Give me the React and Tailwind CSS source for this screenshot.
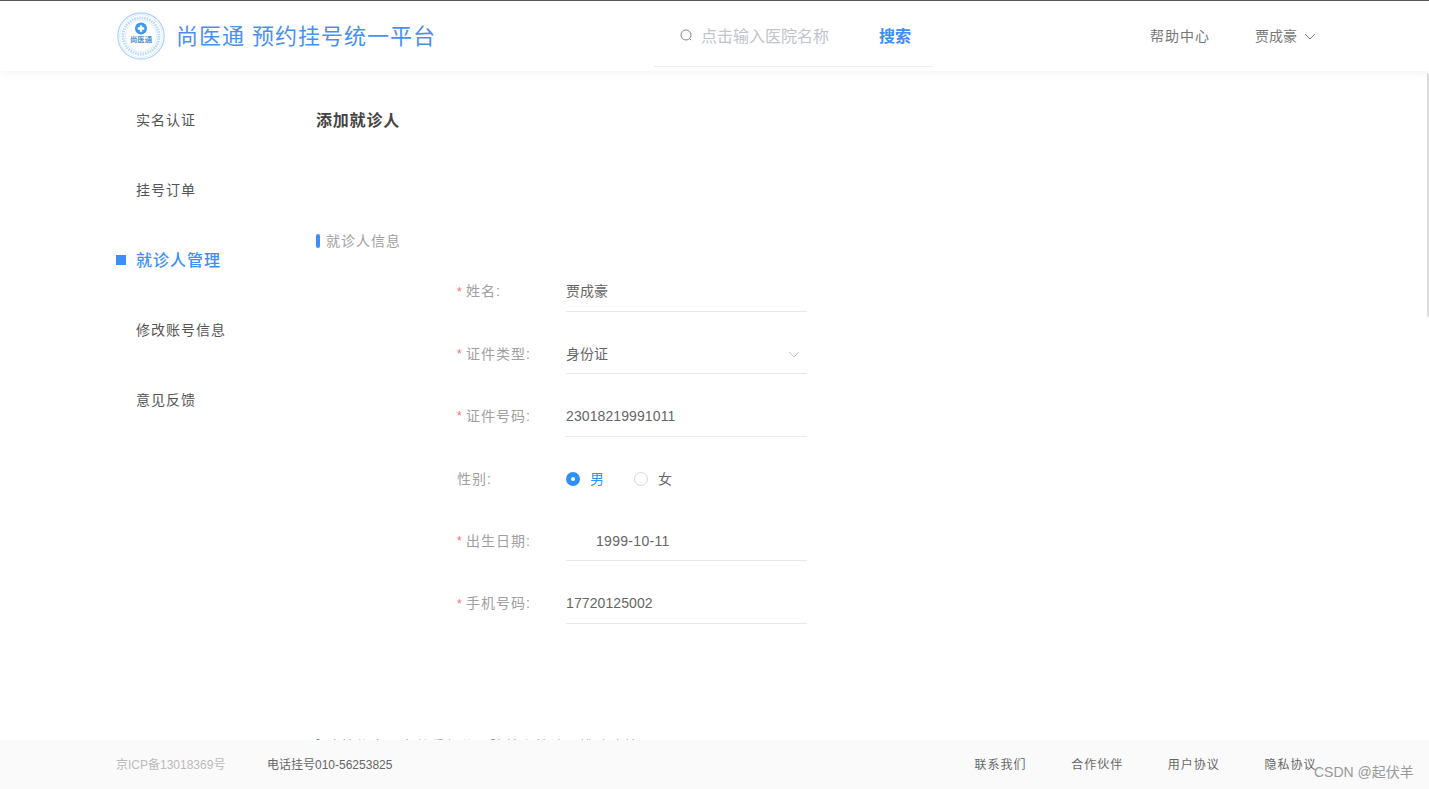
import React from "react";

function Logo() {
  return (
    <svg width="48" height="48" viewBox="0 0 48 48" className="shrink-0">
      <circle cx="24" cy="24" r="23.2" fill="none" stroke="#a9d3fb" strokeWidth="1.2" />
      <circle cx="24" cy="24" r="21.4" fill="none" stroke="#cfe6fd" strokeWidth="0.7" />
      <circle cx="24" cy="24" r="18" fill="none" stroke="#a6d0fa" strokeWidth="3" strokeDasharray="1.6 0.9" opacity="0.75" />
      <circle cx="24" cy="24" r="15.6" fill="none" stroke="#cfe6fd" strokeWidth="0.6" />
      <circle cx="24" cy="16.5" r="6" fill="#3d97f2" />
      <path d="M24 13.2v6.6M20.7 16.5h6.6" stroke="#fff" strokeWidth="2.4" />
      <text x="24" y="29.8" textAnchor="middle" fontSize="7.4" fontWeight="700" fill="#4d8fd6" fontFamily="'Noto Sans CJK SC', sans-serif">尚医通</text>
    </svg>
  );
}

function Field({ required, label, children, plain, short }) {
  return (
    <div className="flex h-[40px] mb-[22.4px] items-center">
      <div className={plain ? "w-[109px] pt-[1px] shrink-0 flex items-center text-[14px] tracking-[1px] text-[#a0a0a0]" : "w-[109px] shrink-0 flex items-center text-[14px] tracking-[1px] text-[#a0a0a0]"}>
        {required && <span className="w-[9px] text-[#f56c6c] text-[12px] leading-none">*</span>}
        <span>{label}:</span>
      </div>
      {plain ? (
        <div className="w-[241px] h-full pt-[1px] flex items-center">{children}</div>
      ) : (
        <div className={short ? "w-[241px] h-[40px] self-start pt-[1px] flex items-center border-b border-[#e8e8e8] text-[14px] text-[#666] relative" : "w-[241px] h-[41px] pt-[1px] flex items-center border-b border-[#e8e8e8] text-[14px] text-[#666] relative"}>
          {children}
        </div>
      )}
    </div>
  );
}

function SideItem({ children, active }) {
  return (
    <div className="h-[70px] flex items-center">
      <span className={active ? "w-[10px] h-[10px] bg-[#3d8ef8] mr-[10px]" : "w-[10px] h-[10px] mr-[10px]"} />
      <span className={active ? "pt-[2px] text-[16px] font-medium tracking-[1px] text-[#3d8ef8]" : "text-[14px] tracking-[1px] text-[#555]"}>{children}</span>
    </div>
  );
}

export default function App() {
  return (
    <div
      className="h-[789px] w-[1429px] flex flex-col overflow-hidden bg-white relative"
      style={{ fontFamily: "'Liberation Sans', 'Noto Sans CJK SC', sans-serif" }}
    >
      <header className="h-[71px] shrink-0 border-t border-[#555] bg-white shadow-[0_2px_8px_rgba(0,0,0,0.05)] relative z-10 flex items-center pl-[117px]">
        <Logo />
        <div className="ml-[12px] w-[477px] -translate-x-[1px] text-[22px] tracking-[1px] text-[#4a90f2]">尚医通 预约挂号统一平台</div>
        <div className="w-[279px] h-[66px] self-start border-b border-[#ececec] flex items-center pl-[26px] pt-[6px]">
          <svg width="13" height="13" viewBox="0 0 13 13" fill="none" stroke="#888" strokeWidth="1" className="shrink-0 -translate-y-[1px]">
            <circle cx="6" cy="6" r="5" />
            <path d="M9.6 9.6l1.6 1.6" />
          </svg>
          <span className="ml-[8px] w-[178px] text-[16px] text-[#c0c4cc]">点击输入医院名称</span>
          <span className="text-[16px] font-bold text-[#3d8ef8]">搜索</span>
        </div>
        <div className="ml-[217px] text-[14px] tracking-[1px] text-[#777]">帮助中心</div>
        <div className="ml-[45px] flex items-center text-[14px] text-[#777]">
          贾成豪
          <svg width="12" height="7" viewBox="0 0 12 7" fill="none" stroke="#777" strokeWidth="1" className="ml-[7px]">
            <path d="M1 1l5 5 5-5" />
          </svg>
        </div>
      </header>

      <main className="flex-1 min-h-0 overflow-hidden flex pl-[116px]">
        <nav className="w-[200px] shrink-0 pt-[14px]">
          <SideItem>实名认证</SideItem>
          <SideItem>挂号订单</SideItem>
          <SideItem active>就诊人管理</SideItem>
          <SideItem>修改账号信息</SideItem>
          <SideItem>意见反馈</SideItem>
        </nav>
        <section className="flex-1">
          <h1 className="h-[24px] mt-[38px] flex items-center text-[16px] font-semibold tracking-[0.8px] text-[#444]">添加就诊人</h1>
          <div className="mt-[96px] h-[24px] flex items-center text-[14px] tracking-[1px] text-[#a0a0a0]">
            <span className="w-[4px] h-[14px] rounded-[2px] bg-[#3d8ef8] mr-[6px]" />
            就诊人信息
          </div>
          <div className="ml-[141px] mt-[18.7px]">
            <Field required label="姓名">贾成豪</Field>
            <Field required short label="证件类型">
              身份证
              <svg width="12" height="7" viewBox="0 0 12 7" fill="none" stroke="#c0c4cc" strokeWidth="1" className="absolute right-[7px] top-[17px]">
                <path d="M1 1l5 5 5-5" />
              </svg>
            </Field>
            <Field required label="证件号码"><span className="tracking-[0.1px]">23018219991011</span></Field>
            <Field label="性别" plain>
              <span className="w-[14px] h-[14px] rounded-full bg-[#2f90f5] flex items-center justify-center">
                <span className="w-[4px] h-[4px] rounded-full bg-white" />
              </span>
              <span className="ml-[10px] text-[14px] text-[#2f90f5]">男</span>
              <span className="ml-[30px] w-[14px] h-[14px] rounded-full border border-[#d9d9d9]" />
              <span className="ml-[10px] text-[14px] text-[#666]">女</span>
            </Field>
            <Field required short label="出生日期"><span className="pl-[30px] tracking-[0.3px]">1999-10-11</span></Field>
            <Field required label="手机号码"><span className="tracking-[0.1px]">17720125002</span></Field>
          </div>
          <div className="mt-[110.5px] h-[24px] flex items-center text-[14px] tracking-[0.9px] text-[#a0a0a0]">
            <span className="w-[4px] h-[14px] rounded-[2px] bg-[#3d8ef8] mr-[6px]" />
            建档信息（完善后部分医院首次就诊不排队建档）
          </div>
        </section>
      </main>

      <footer className="h-[49px] shrink-0 bg-[#fafafa] relative z-10 flex items-center pl-[116px] pt-[1px] text-[12px]">
        <span className="w-[151px] text-[#bbb]">京ICP备13018369号</span>
        <span className="text-[#666]">电话挂号010-56253825</span>
        <div className="ml-[582px] flex gap-[44.7px] tracking-[1px] text-[#666]">
          <span>联系我们</span>
          <span>合作伙伴</span>
          <span>用户协议</span>
          <span>隐私协议</span>
        </div>
      </footer>

      <div className="absolute left-[1314px] top-[762px] z-20 text-[14px] leading-[20px] text-[#999] whitespace-nowrap">CSDN @起伏羊</div>
      <div className="absolute right-0 top-[73px] z-20 w-[2px] h-[244px] rounded-[1px] bg-[#dcdcdc]" />
    </div>
  );
}
